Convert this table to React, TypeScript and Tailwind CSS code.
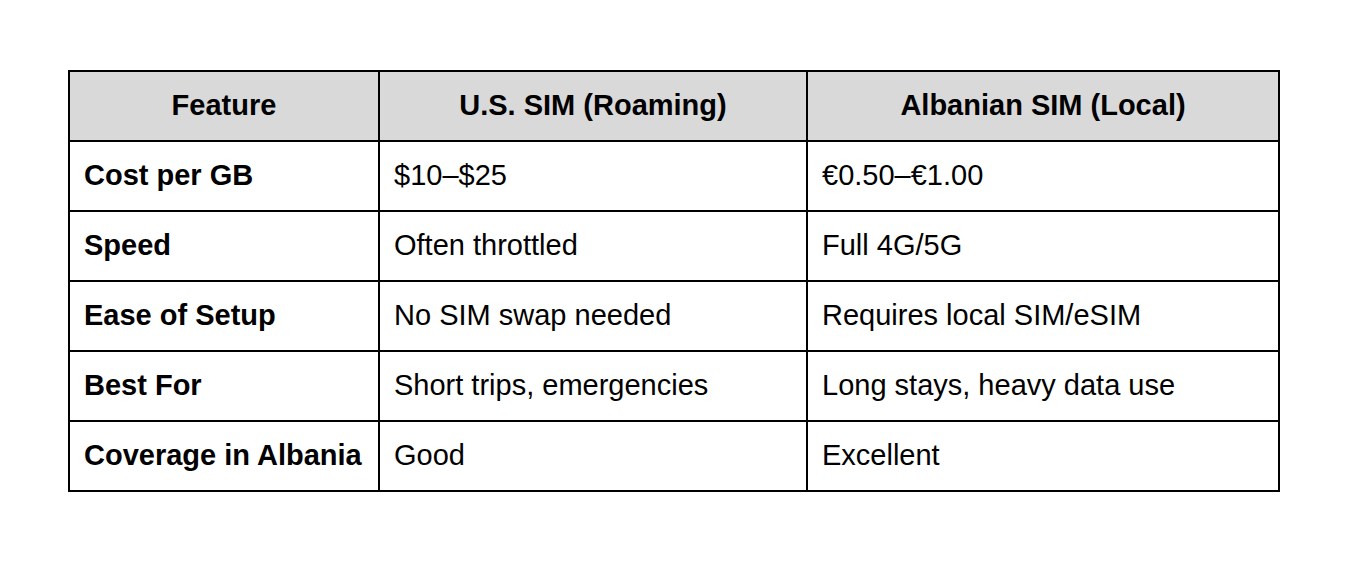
const ROWS: [string, string, string][] = [
  ["Cost per GB", "$10–$25", "€0.50–€1.00"],
  ["Speed", "Often throttled", "Full 4G/5G"],
  ["Ease of Setup", "No SIM swap needed", "Requires local SIM/eSIM"],
  ["Best For", "Short trips, emergencies", "Long stays, heavy data use"],
  ["Coverage in Albania", "Good", "Excellent"],
];

export default function App() {
  return (
    <div className="min-h-[562px] bg-white pt-[70px] pl-[68px] font-['Liberation_Sans',Arial,sans-serif] text-black">
      <table className="w-[1212px] table-fixed border-collapse text-[29px] leading-[1.15]">
        <colgroup>
          <col className="w-[310px]" />
          <col className="w-[428px]" />
          <col />
        </colgroup>
        <thead>
          <tr className="h-[70px] bg-[#d9d9d9]">
            {["Feature", "U.S. SIM (Roaming)", "Albanian SIM (Local)"].map((h) => (
              <th key={h} className="border-2 border-black p-0 text-center font-bold">{h}</th>
            ))}
          </tr>
        </thead>
        <tbody>
          {ROWS.map(([feature, us, al]) => (
            <tr key={feature} className="h-[70px]">
              <td className="border-2 border-black px-[14px] py-0 font-bold whitespace-nowrap">{feature}</td>
              <td className="border-2 border-black px-[14px] py-0">{us}</td>
              <td className="border-2 border-black px-[14px] py-0">{al}</td>
            </tr>
          ))}
        </tbody>
      </table>
    </div>
  );
}
